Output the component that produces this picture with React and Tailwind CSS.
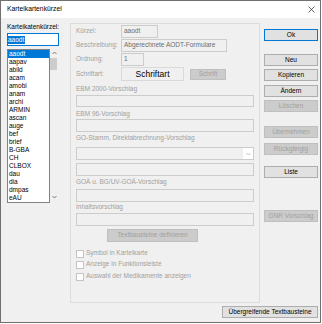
import React from "react";

const items = [
  "aaodt", "aapav", "abild", "acam", "amobi", "anam", "archi", "ARMIN", "ascan", "auge",
  "bef", "brief", "B-GBA", "CH", "CLBOX", "dau", "dia", "dmpas", "eAU",
];

function Btn({ children, disabled, focus, className = "" }) {
  const look = disabled
    ? "bg-[#cccccc] border-[#bfbfbf] text-[#a0a0a0]"
    : focus
    ? "bg-[#e1e1e1] border-[#0078d7] text-black"
    : "bg-[#e1e1e1] border-[#adadad] text-black";
  return (
    <div className={`flex items-center justify-center border leading-none ${look} ${className}`}>
      {children}
    </div>
  );
}

function Field({ className = "", children }) {
  return (
    <div className={`flex items-center border border-[#cccccc] bg-[#f0f0f0] pl-[2px] text-[#6d6d6d] leading-none ${className}`}>
      {children}
    </div>
  );
}

function Label({ className = "", children }) {
  return <div className={`h-[9px] flex items-center text-[#a0a0a0] leading-none ${className}`}>{children}</div>;
}

function Check({ label, className = "" }) {
  return (
    <div className={`h-[9px] flex items-center gap-[2px] ${className}`}>
      <div className="w-[8px] h-[8px] border border-[#c4c4c4] bg-white" />
      <span className="text-[#a0a0a0] leading-none">{label}</span>
    </div>
  );
}

export default function App() {
  return (
    <div className="w-[321px] h-[323px] border border-[#707070] bg-[#f0f0f0] flex flex-col font-['Liberation_Sans',sans-serif] text-[6.5px] text-black">
      {/* title bar */}
      <div className="h-[17px] bg-white flex items-center pl-[6px] pr-[5px]">
        <span className="text-[6.8px] leading-none">Karteikartenkürzel</span>
        <svg className="ml-auto" width="7" height="7" viewBox="0 0 7 7">
          <path d="M0.5 0.5 L6.5 6.5 M6.5 0.5 L0.5 6.5" stroke="#222" strokeWidth="0.7" />
        </svg>
      </div>

      <div className="flex-1 flex flex-col">
        <div className="flex items-start pl-[6px]">
          {/* left column */}
          <div className="w-[52px] flex flex-col">
            <div className="mt-[5px] h-[9px] flex items-center leading-none">Karteikatenkürzel:</div>
            <div className="mt-[1px] h-[13px] border border-[#0078d7] bg-white flex items-center">
              <span className="bg-[#0078d7] text-white leading-[8px] pr-[1px]">aaodt</span>
            </div>
            <div className="mt-[3px] flex">
              <div className="w-[43px] h-[154px] border border-[#828282] bg-white flex flex-col">
                {items.map((it, i) => (
                  <div
                    key={it}
                    className={`h-[8px] shrink-0 flex items-center pl-[1px] leading-none ${
                      i === 0 ? "bg-[#0078d7] text-white" : ""
                    }`}
                  >
                    {it}
                  </div>
                ))}
              </div>
              <div className="w-[8px] h-[154px] flex flex-col items-center">
                <svg className="mt-[2px]" width="5" height="4" viewBox="0 0 5 4">
                  <path d="M0.5 3 L2.5 1 L4.5 3" fill="none" stroke="#606060" strokeWidth="0.8" />
                </svg>
                <div className="mt-[3px] self-start w-[7px] h-[12px] bg-[#cdcdcd]" />
                <svg className="mt-auto mb-[4px]" width="5" height="4" viewBox="0 0 5 4">
                  <path d="M0.5 1 L2.5 3 L4.5 1" fill="none" stroke="#606060" strokeWidth="0.8" />
                </svg>
              </div>
            </div>
          </div>

          {/* group box */}
          <div className="ml-[11px] mt-[5px] w-[190px] h-[280px] border border-[#dcdcdc] flex flex-col pl-[5px] pr-[5px]">
            <div className="mt-[1px] flex items-center">
              <Label className="w-[45px]">Kürzel:</Label>
              <Field className="w-[37px] h-[13px]">aaodt</Field>
            </div>
            <div className="mt-[1px] flex items-center">
              <Label className="w-[45px]">Beschreibung:</Label>
              <Field className="w-[106px] h-[13px]">Abgerechnete AODT-Formulare</Field>
            </div>
            <div className="mt-[1px] flex items-center">
              <Label className="w-[45px]">Ordnung:</Label>
              <Field className="w-[23px] h-[13px]">1</Field>
            </div>
            <div className="mt-[1px] flex items-start">
              <Label className="w-[45px] mt-[3px]">Schriftart:</Label>
              <div className="w-[63px] h-[14px] border border-[#d9d9d9] flex items-center justify-center text-[8.5px] leading-none">
                Schriftart
              </div>
              <Btn disabled className="ml-[6px] mt-[2px] w-[36px] h-[11px]">Schrift</Btn>
            </div>

            <Label className="mt-[4px]">EBM 2000-Vorschlag</Label>
            <Field className="mt-[1px] h-[12px]" />
            <Label className="mt-[3px]">EBM 96-Vorschlag</Label>
            <Field className="h-[13px]" />
            <Label className="mt-[2px]">GO-Stamm, Direktabrechnung-Vorschlag</Label>
            <div className="mt-[4px] h-[13px] border border-[#cccccc] bg-[#f0f0f0] flex justify-end">
              <div className="w-[10px] h-full bg-white flex items-center justify-center">
                <svg width="5" height="4" viewBox="0 0 5 4">
                  <path d="M0.5 1 L2.5 3 L4.5 1" fill="none" stroke="#a8a8a8" strokeWidth="0.7" />
                </svg>
              </div>
            </div>
            <Field className="mt-[3px] h-[13px]" />
            <Label className="mt-[2px]">GOÄ u. BG/UV-GOÄ-Vorschlag</Label>
            <Field className="mt-[2px] h-[13px]" />
            <Label className="mt-[1px]">Inhaltsvorschlag</Label>
            <Field className="mt-[1px] h-[13px]" />
            <Btn disabled className="mt-[3px] ml-[31px] w-[91px] h-[13px]">Textbausteine definieren</Btn>

            <Check className="mt-[7px]" label="Symbol in Karteikarte" />
            <Check className="mt-[2px]" label="Anzeige in Funktionsleiste" />
            <Check className="mt-[3px]" label="Auswahl der Medikamente anzeigen" />
          </div>

          {/* right buttons */}
          <div className="ml-[4px] w-[54px] flex flex-col">
            <Btn focus className="mt-[11px] h-[12px]">Ok</Btn>
            <Btn className="mt-[13px] h-[12px]">Neu</Btn>
            <Btn className="mt-[3px] h-[12px]">Kopieren</Btn>
            <Btn className="mt-[4px] h-[12px]">Ändern</Btn>
            <Btn disabled className="mt-[3px] h-[12px]">Löschen</Btn>
            <Btn disabled className="mt-[14px] h-[12px]">Übernehmen</Btn>
            <Btn disabled className="mt-[5px] h-[12px]">Rückgängig</Btn>
            <Btn className="mt-[11px] h-[12px]">Liste</Btn>
            <Btn disabled className="mt-[32px] h-[12px]">GNR Vorschlag</Btn>
          </div>
        </div>

        <div className="mt-[3px] flex justify-end pr-[2px]">
          <Btn className="w-[96px] h-[12px]">Übergreifende Textbausteine</Btn>
        </div>
      </div>
    </div>
  );
}
